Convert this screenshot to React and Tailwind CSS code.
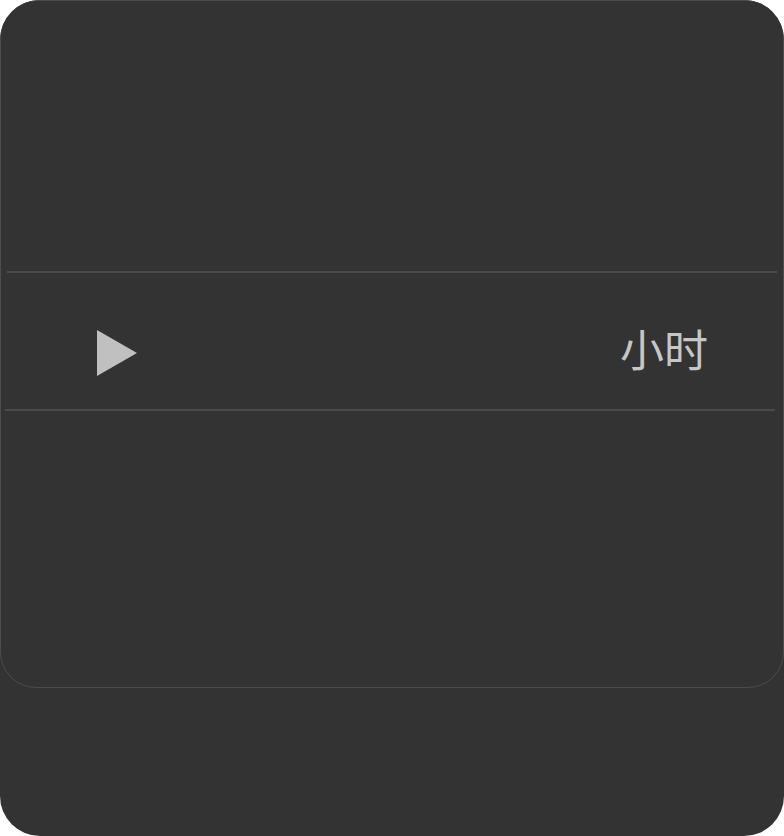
import React from 'react';

const Play = () => (
  <svg width="40" height="46" viewBox="0 0 40 46" className="block">
    <polygon points="0,0 40,23 0,46" fill="#c0c0c0" />
  </svg>
);

export default function App() {
  return (
    <div className="w-[784px] h-[836px] bg-white">
      <div className="w-[784px] h-[836px] bg-[#333333] rounded-[40px] overflow-hidden">
        <div className="h-[688px] border border-[#4d4d4d] rounded-[36px] bg-[#333333] flex flex-col">
          <div className="h-[270px]" />
          <div className="h-[2px] bg-[#4a4a4a] ml-[6px] mr-[6px]" />
          <div className="h-[136px] flex items-center justify-between pl-[96px] pr-[75px]">
            <div className="mt-[24px]">
              <Play />
            </div>
            <span
              className="text-[44px] leading-none text-[#c6c6c6] mt-[13px]"
              style={{ fontFamily: '"Noto Sans CJK SC", "Noto Sans", sans-serif' }}
            >
              小时
            </span>
          </div>
          <div className="h-[2px] bg-[#4a4a4a] ml-[4px] mr-[8px]" />
          <div className="flex-1" />
        </div>
      </div>
    </div>
  );
}
